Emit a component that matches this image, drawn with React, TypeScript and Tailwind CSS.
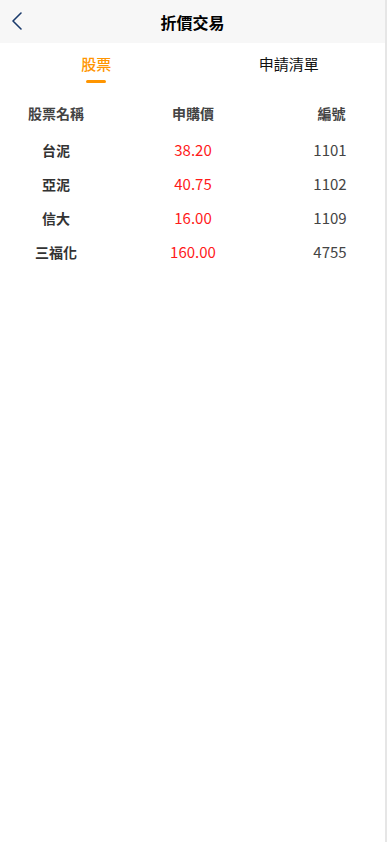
const stocks = [
  { name: "台泥", price: "38.20", code: "1101" },
  { name: "亞泥", price: "40.75", code: "1102" },
  { name: "信大", price: "16.00", code: "1109" },
  { name: "三福化", price: "160.00", code: "4755" },
];

const font = { fontFamily: '"Noto Sans CJK TC", "Open Sans", sans-serif' };

export default function App() {
  return (
    <div className="flex min-h-screen w-full bg-white" style={font}>
      <div className="flex w-[387px] flex-col border-r-2 border-[#e6e6e6]">
        <header className="relative flex h-[43px] items-center justify-center bg-[#f7f7f7]">
          <button className="absolute left-[10px] top-[11px] text-[#1a3a6b]">
            <svg width="14" height="20" viewBox="0 0 14 20" fill="none">
              <path d="M11 2 L3 10 L11 18" stroke="currentColor" strokeWidth="1.6" strokeLinecap="round" strokeLinejoin="round" />
            </svg>
          </button>
          <h1 className="text-[16px] font-bold text-black">折價交易</h1>
        </header>

        <div className="flex h-[48px]">
          <div className="flex flex-1 flex-col items-center pt-[10px]">
            <span className="text-[15px] leading-[22px] font-medium text-[#ff9500]">股票</span>
            <span className="mt-[5px] h-[3px] w-[20px] rounded-full bg-[#ff9500]" />
          </div>
          <div className="flex flex-1 flex-col items-center pt-[10px]">
            <span className="text-[15px] leading-[22px] text-[#111]">申請清單</span>
          </div>
        </div>

        <div className="mt-[2px] grid grid-cols-[112px_112px_112px] gap-x-[25px] text-center text-[14px]">
          <div className="h-[40px] leading-[40px] font-bold text-[#444]">股票名稱</div>
          <div className="h-[40px] leading-[40px] font-bold text-[#444]">申購價</div>
          <div className="h-[40px] leading-[40px] pl-[3px] font-bold text-[#444]">編號</div>
          {stocks.map((s) => (
            <div key={s.code} className="contents">
              <div className="h-[34px] leading-[34px] font-bold text-[#333]">{s.name}</div>
              <div className="h-[34px] leading-[34px] text-[15px] text-[#ff1a1a]">{s.price}</div>
              <div className="h-[34px] leading-[34px] text-[15px] text-[#444]">{s.code}</div>
            </div>
          ))}
        </div>
      </div>
    </div>
  );
}
